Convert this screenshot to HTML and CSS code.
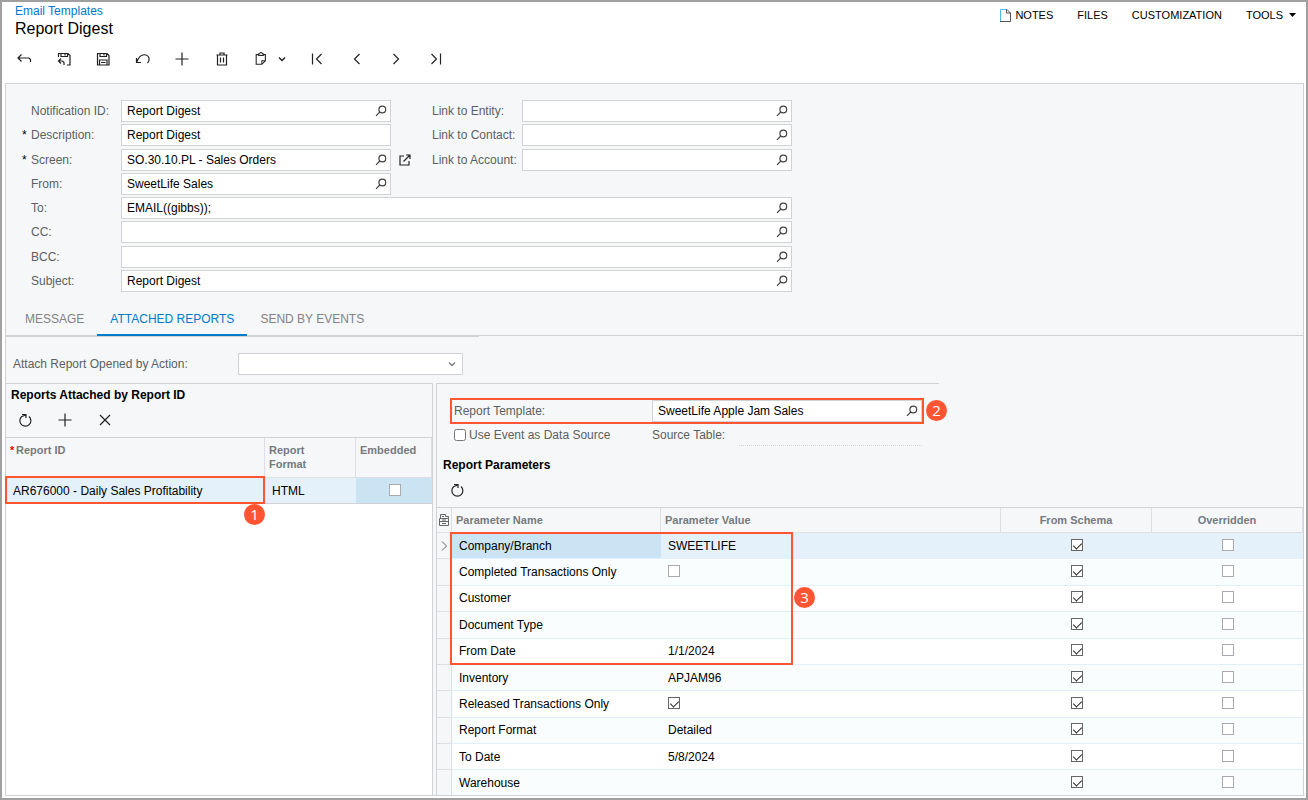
FILE: index.html
```html
<!DOCTYPE html>
<html lang="en">
<head>
  <meta charset="UTF-8" />
  <meta name="viewport" content="width=device-width, initial-scale=1.0"/>
  <title>Report Digest</title>
  <link rel="stylesheet" href="styles.css">
</head>
<body>

  <!-- Shared icons -->
  <svg class="sprite" aria-hidden="true">
    <symbol id="search" viewBox="0 0 12 12"><circle cx="7.3" cy="4.5" r="3.4"/><path d="M4.800 7L1 10.800"/></symbol>
    <symbol id="refresh" viewBox="0 0 16 16"><path d="M12 4.500a5.500 5.500 0 1 1-7.500 0.200L8.500 3M5 2.500h4V6"/></symbol>
    <symbol id="plus" viewBox="0 0 16 16"><path d="M8 1.500v13M1.500 8h13"/></symbol>
  </svg>

  <header class="header">
    <div>
      <a href="#" class="breadcrumb">Email Templates</a>
      <h1>Report Digest</h1>
    </div>
    <nav class="menu">
      <a href="#"><svg class="note-icon" viewBox="0 0 12 13"><path class="note-side" d="M1.5 12V.5H8"/><path d="M7.5.5v3.5h4M8 .5l3.5 3.5v8.5H1"/></svg>NOTES</a>
      <a href="#">FILES</a>
      <a href="#">CUSTOMIZATION</a>
      <a href="#">TOOLS<svg class="caret" viewBox="0 0 7 4"><path d="M0 0h7L3.5 4z"/></svg></a>
    </nav>
  </header>

  <!-- Main toolbar -->
  <div class="toolbar main-toolbar">
    <button aria-label="Back"><svg viewBox="0 0 16 16"><path d="M5.5 3.5L2 7l3.500 3.500M2 7h11l1.500 1.500V11"/></svg></button>
    <button aria-label="Save and close"><svg viewBox="0 0 16 16"><path d="M2.500 6V2.500h9.500l2 2v9.500h-3M5 2.500v3h6.500v-3M9 3v1.500M5 7.500L2.500 10 5 12.500M2.500 10h4l1.500 1.500V14"/></svg></button>
    <button aria-label="Save"><svg viewBox="0 0 16 16"><path d="M2.500 2.500h9.500l2 2V14H2.500zM5 2.500v3h6.500v-3M9 3v1.500M4.500 14V9h7.500v5M6 11.500h4.500"/></svg></button>
    <button aria-label="Undo"><svg viewBox="0 0 16 16"><path d="M1.500 7v4.500H6M1.700 11.300C3.500 6 7 3 11 4c3.500 1.200 4.200 5 1.500 8"/></svg></button>
    <button aria-label="Add"><svg><use href="#plus"/></svg></button>
    <button aria-label="Delete"><svg viewBox="0 0 16 16"><path d="M2.500 4h11M6 4V2h4v2M3.500 4v10h9V4M6.500 6.500v5M9.500 6.500v5"/></svg></button>
    <button class="clipboard" aria-label="Clipboard">
      <svg viewBox="0 0 16 16"><path d="M5 3H2.500v11H9l4-4V3h-2.500M5.500 2h1a1.500 1.500 0 0 1 3 0h1v2h-5zM9 14v-4h4"/></svg>
      <svg class="drop" viewBox="0 0 8 8"><path d="M1 2.500l3 3 3-3"/></svg>
    </button>
    <button aria-label="First"><svg viewBox="0 0 16 16"><path d="M3.500 2.500v11M12.500 3L7.500 8l5 5"/></svg></button>
    <button aria-label="Previous"><svg viewBox="0 0 16 16"><path d="M10.500 3l-5 5 5 5"/></svg></button>
    <button aria-label="Next"><svg viewBox="0 0 16 16"><path d="M5.500 3l5 5-5 5"/></svg></button>
    <button aria-label="Last"><svg viewBox="0 0 16 16"><path d="M12.500 2.500v11M3.500 3l5 5-5 5"/></svg></button>
  </div>

  <main class="panel">
    <!-- Template summary -->
    <form class="summary">
      <label for="notificationId">Notification ID:</label>
      <div class="field"><input id="notificationId" value="Report Digest"><button type="button" aria-label="Select"><svg><use href="#search"/></svg></button></div>
      <label class="second" for="entity">Link to Entity:</label>
      <div class="field"><input id="entity"><button type="button" aria-label="Select"><svg><use href="#search"/></svg></button></div>

      <label class="required" for="description">Description:</label>
      <div class="field"><input id="description" value="Report Digest"></div>
      <label class="second" for="contact">Link to Contact:</label>
      <div class="field"><input id="contact"><button type="button" aria-label="Select"><svg><use href="#search"/></svg></button></div>

      <label class="required" for="screen">Screen:</label>
      <div class="field"><input id="screen" value="SO.30.10.PL - Sales Orders"><button type="button" aria-label="Select"><svg><use href="#search"/></svg></button></div>
      <a class="open-link" href="#" aria-label="Open screen"><svg viewBox="0 0 12 12"><path d="M5 2H1v9h9V7M4.500 7.500L11 1M7 1h4v4"/></svg></a>
      <label class="second" for="account">Link to Account:</label>
      <div class="field"><input id="account"><button type="button" aria-label="Select"><svg><use href="#search"/></svg></button></div>

      <label for="from">From:</label>
      <div class="field"><input id="from" value="SweetLife Sales"><button type="button" aria-label="Select"><svg><use href="#search"/></svg></button></div>

      <label for="to">To:</label>
      <div class="field wide"><input id="to" value="EMAIL((gibbs));"><button type="button" aria-label="Select"><svg><use href="#search"/></svg></button></div>

      <label for="cc">CC:</label>
      <div class="field wide"><input id="cc"><button type="button" aria-label="Select"><svg><use href="#search"/></svg></button></div>

      <label for="bcc">BCC:</label>
      <div class="field wide"><input id="bcc"><button type="button" aria-label="Select"><svg><use href="#search"/></svg></button></div>

      <label for="subject">Subject:</label>
      <div class="field wide"><input id="subject" value="Report Digest"><button type="button" aria-label="Select"><svg><use href="#search"/></svg></button></div>
    </form>

    <!-- Tabs -->
    <div class="tab-bar">
      <div class="tabs" role="tablist">
        <button role="tab">MESSAGE</button>
        <button role="tab" class="active" aria-selected="true">ATTACHED REPORTS</button>
        <button role="tab">SEND BY EVENTS</button>
      </div>
    </div>

    <div class="action-row">
      <label for="action">Attach Report Opened by Action:</label>
      <div class="select-wrap">
        <select id="action"><option></option></select>
        <svg viewBox="0 0 8 8"><path d="M1 2.500l3 3 3-3"/></svg>
      </div>
    </div>

    <div class="split">
      <!-- Attached reports -->
      <section class="left-pane">
        <h2>Reports Attached by Report ID</h2>
        <div class="toolbar">
          <button aria-label="Refresh"><svg><use href="#refresh"/></svg></button>
          <button aria-label="Add"><svg><use href="#plus"/></svg></button>
          <button aria-label="Delete"><svg viewBox="0 0 16 16"><path d="M3 3l10 10M13 3L3 13"/></svg></button>
        </div>
        <div class="reports-wrap">
          <table class="grid reports">
            <colgroup><col class="col-report"><col class="col-format"><col></colgroup>
            <thead>
              <tr><th class="required-col">Report ID</th><th>Report<br>Format</th><th>Embedded</th></tr>
            </thead>
            <tbody>
              <tr class="selected"><td>AR676000 - Daily Sales Profitability</td><td>HTML</td><td class="check current"><input type="checkbox" aria-label="Embedded"></td></tr>
            </tbody>
          </table>
          <div class="highlight highlight-report"><span class="badge">1</span></div>
        </div>
      </section>

      <!-- Report parameters -->
      <section class="right-pane">
        <div class="template-form">
          <div class="template-row">
            <label for="template">Report Template:</label>
            <div class="field"><input id="template" value="SweetLife Apple Jam Sales"><button type="button" aria-label="Select"><svg><use href="#search"/></svg></button></div>
            <div class="highlight highlight-template"><span class="badge">2</span></div>
          </div>
          <div class="source-row">
            <label class="event"><input type="checkbox">Use Event as Data Source</label>
            <div class="source"><span>Source Table:</span><output></output></div>
          </div>
        </div>
        <h2>Report Parameters</h2>
        <div class="toolbar">
          <button aria-label="Refresh"><svg><use href="#refresh"/></svg></button>
        </div>
        <div class="params-wrap">
          <table class="grid params">
            <colgroup><col class="col-mark"><col class="col-name"><col><col class="col-flag"><col class="col-flag"></colgroup>
            <thead>
              <tr>
                <th class="mark"><svg viewBox="0 0 10 12"><path d="M1.500 4.500v-4h5v2h3v2M.500 4.500h9v7h-9zM.500 7.500h9M3 2.500h2M3 6h4M3 9.500h4"/></svg></th>
                <th>Parameter Name</th><th>Parameter Value</th><th class="check">From Schema</th><th class="check">Overridden</th>
              </tr>
            </thead>
            <tbody>
              <tr class="selected"><td class="mark"><svg viewBox="0 0 10 12"><path d="M3 1.500L7.500 6 3 10.500"/></svg></td><td class="current">Company/Branch</td><td>SWEETLIFE</td><td class="check"><input type="checkbox" aria-label="From schema" checked></td><td class="check"><input type="checkbox" aria-label="Overridden"></td></tr>
              <tr><td class="mark"></td><td>Completed Transactions Only</td><td><input type="checkbox" aria-label="Value"></td><td class="check"><input type="checkbox" aria-label="From schema" checked></td><td class="check"><input type="checkbox" aria-label="Overridden"></td></tr>
              <tr><td class="mark"></td><td>Customer</td><td></td><td class="check"><input type="checkbox" aria-label="From schema" checked></td><td class="check"><input type="checkbox" aria-label="Overridden"></td></tr>
              <tr><td class="mark"></td><td>Document Type</td><td></td><td class="check"><input type="checkbox" aria-label="From schema" checked></td><td class="check"><input type="checkbox" aria-label="Overridden"></td></tr>
              <tr><td class="mark"></td><td>From Date</td><td>1/1/2024</td><td class="check"><input type="checkbox" aria-label="From schema" checked></td><td class="check"><input type="checkbox" aria-label="Overridden"></td></tr>
              <tr><td class="mark"></td><td>Inventory</td><td>APJAM96</td><td class="check"><input type="checkbox" aria-label="From schema" checked></td><td class="check"><input type="checkbox" aria-label="Overridden"></td></tr>
              <tr><td class="mark"></td><td>Released Transactions Only</td><td><input type="checkbox" aria-label="Value" checked></td><td class="check"><input type="checkbox" aria-label="From schema" checked></td><td class="check"><input type="checkbox" aria-label="Overridden"></td></tr>
              <tr><td class="mark"></td><td>Report Format</td><td>Detailed</td><td class="check"><input type="checkbox" aria-label="From schema" checked></td><td class="check"><input type="checkbox" aria-label="Overridden"></td></tr>
              <tr><td class="mark"></td><td>To Date</td><td>5/8/2024</td><td class="check"><input type="checkbox" aria-label="From schema" checked></td><td class="check"><input type="checkbox" aria-label="Overridden"></td></tr>
              <tr><td class="mark"></td><td>Warehouse</td><td></td><td class="check"><input type="checkbox" aria-label="From schema" checked></td><td class="check"><input type="checkbox" aria-label="Overridden"></td></tr>
            </tbody>
          </table>
          <div class="highlight highlight-params"><span class="badge">3</span></div>
        </div>
      </section>
    </div>
  </main>

</body>
</html>
```

FILE: styles.css
```css
* {
  box-sizing: border-box;
}

body {
  margin: 0;
  min-height: 100vh;
  padding: 0 2px 2px 3px;
  border: 2px solid #a0a0a0;
  display: flex;
  flex-direction: column;
  font-family: "Liberation Sans", Arial, sans-serif;
  font-size: 12px;
  color: #000;
  background: #fff;
}

h1, h2 {
  margin: 0;
}

a {
  color: inherit;
  text-decoration: none;
}

button {
  padding: 0;
  border: 0;
  background: none;
  font: inherit;
  color: inherit;
  cursor: pointer;
}

svg {
  display: block;
  fill: none;
  stroke: currentColor;
}

.sprite {
  position: absolute;
  width: 0;
  height: 0;
}

/* Header */
.header {
  display: flex;
  justify-content: space-between;
  padding: 0 8px 0 10px;
}

.breadcrumb {
  display: block;
  line-height: 18px;
  color: #027acc;
}

h1 {
  font-size: 16px;
  font-weight: normal;
  line-height: 18px;
}

.menu {
  display: flex;
  gap: 24px;
  height: 26px;
  font-size: 11px;
}

.menu a {
  display: flex;
  align-items: center;
}

.note-icon {
  width: 12px;
  height: 13px;
  margin-right: 4px;
  stroke: #555;
}

.note-side {
  stroke: #4dbbe8;
}

.caret {
  width: 7px;
  height: 4px;
  margin-left: 6px;
  fill: #000;
  stroke: none;
}

/* Toolbars */
.toolbar {
  display: flex;
  align-items: center;
  gap: 24px;
  height: 28px;
  margin-bottom: 3px;
  padding-left: 11px;
  color: #222;
}

.toolbar button {
  flex: none;
  width: 16px;
}

.toolbar svg {
  width: 16px;
  height: 16px;
  stroke-width: 1.2;
}

.main-toolbar {
  width: 439px;
  height: 42px;
  justify-content: space-between;
  gap: 0;
}

.toolbar .clipboard {
  display: flex;
  align-items: center;
  gap: 10px;
  width: 32px;
}

.toolbar .drop {
  flex: none;
  width: 8px;
  height: 8px;
  stroke-width: 1.5;
}

/* Panel */
.panel {
  flex: 1;
  display: flex;
  flex-direction: column;
  border: 1px solid #d0d2d6;
  background: #f5f7f9;
}

label, .source {
  color: #5c5f63;
}

.summary {
  display: grid;
  grid-template-columns: 99px 270px 41px 90px 270px;
  grid-auto-rows: 1fr;
  align-items: center;
  height: 209px;
  padding: 15px 0 0 16px;
}

.summary label::before {
  content: "";
  display: inline-block;
  width: 9px;
  color: #000;
}

.summary .required::before {
  content: "*";
}

.summary label {
  grid-column: 1;
}

.summary .second {
  grid-column: 4;
}

.summary .second::before {
  display: none;
}

.summary .wide {
  grid-column: 2 / 6;
}

.field {
  display: flex;
  align-items: center;
  height: 22px;
  border: 1px solid #d0d2d6;
  background: #fff;
}

.field input {
  flex: 1;
  min-width: 0;
  padding: 0 5px;
  border: 0;
  outline: 0;
  background: none;
  font: inherit;
  color: #000;
}

.field button {
  margin-right: 3px;
}

.field svg {
  width: 12px;
  height: 12px;
  stroke: #444;
  stroke-width: 1.2;
}

.open-link svg {
  width: 12px;
  height: 12px;
  margin-left: 8px;
  stroke: #222;
  stroke-width: 1.2;
}

/* Tabs */
.tab-bar {
  display: flex;
  align-items: flex-end;
  height: 43px;
  border-bottom: 1px solid #d0d2d6;
}

.tabs {
  display: flex;
  width: 473px;
  margin-bottom: -2px;
  padding-left: 6px;
  border-bottom: 2px solid #d0d2d6;
}

.tabs button {
  margin-bottom: -1px;
  padding: 0 13px;
  border-bottom: 2px solid transparent;
  line-height: 30px;
  color: #808285;
}

.tabs .active {
  border-color: #027acc;
  color: #027acc;
}

.action-row {
  display: flex;
  align-items: center;
  padding: 17px 0 8px 7px;
}

.action-row label {
  width: 225px;
}

.select-wrap {
  position: relative;
}

.select-wrap select {
  display: block;
  appearance: none;
  width: 225px;
  height: 22px;
  border: 1px solid #d0d2d6;
  border-radius: 0;
  background: #fff;
  font: inherit;
}

.select-wrap svg {
  position: absolute;
  top: 7px;
  right: 7px;
  width: 8px;
  height: 8px;
  stroke: #777;
  stroke-width: 1.3;
  pointer-events: none;
}

/* Panes */
.split {
  flex: 1;
  display: grid;
  grid-template-columns: 427px 1fr;
  gap: 3px;
}

.left-pane {
  display: flex;
  flex-direction: column;
  border-top: 1px solid #d0d2d6;
  border-right: 1px solid #d0d2d6;
}

.right-pane {
  border-left: 1px solid #d0d2d6;
}

h2 {
  padding-left: 5px;
  font-size: 12px;
  line-height: 22px;
}

.right-pane h2 {
  padding-left: 6px;
}

.right-pane .toolbar {
  padding-left: 12px;
}

.template-form {
  width: 502px;
  padding: 14px 17px 8px;
  border-top: 1px solid #d0d2d6;
}

.template-row, .source-row {
  position: relative;
  display: grid;
  grid-template-columns: 198px 270px;
  align-items: center;
  height: 26px;
}

.source-row {
  height: 22px;
}

.event {
  display: flex;
  align-items: center;
}

.event input {
  width: 12px;
  height: 12px;
  margin: 0 3px 0 0;
}

.source {
  display: flex;
  line-height: 22px;
}

.source span {
  width: 87px;
}

.source output {
  flex: 1;
  border-bottom: 1px dotted #d0d2d6;
}

/* Grids */
.grid {
  width: 100%;
  table-layout: fixed;
  border-collapse: separate;
  border-spacing: 0;
  border-top: 1px solid #d0d2d6;
}

.grid th {
  padding: 0 4px;
  border-right: 1px solid #dcdfe3;
  border-bottom: 1px solid #dcdfe3;
  background: #f5f7f9;
  font-size: 11px;
  line-height: 14px;
  text-align: left;
  color: #777a7d;
}

.grid td {
  padding: 0 7px;
  border-bottom: 1px solid #e0effa;
}

.grid .selected td {
  background: #e4f1fa;
}

.grid .selected .current {
  background: #cae4f4;
}

.grid .check {
  text-align: center;
}

.grid td.check {
  padding-left: 8px;
}

.grid input {
  display: block;
  position: relative;
  appearance: none;
  width: 12px;
  height: 12px;
  margin: 0 0 2px;
  border: 1px solid #aca8b0;
  background: #fff;
}

.grid .check input {
  margin: 0 auto 2px;
}

.grid input:checked {
  border-color: #666;
}

.grid input:checked::after {
  content: "";
  position: absolute;
  top: 1px;
  left: 3px;
  width: 4px;
  height: 7px;
  border: solid #222;
  border-width: 0 1px 1px 0;
  transform: rotate(45deg);
}

.reports-wrap {
  position: relative;
  flex: 1;
  background: #fff;
}

.reports th {
  height: 40px;
  padding-top: 5px;
  vertical-align: top;
}

.reports td {
  height: 26px;
  border-color: #d0d2d6;
}

.required-col::before {
  content: "*";
  display: inline-block;
  width: 6px;
  color: #f00000;
}

.col-report {
  width: 259px;
}

.col-format {
  width: 91px;
}

.params-wrap {
  position: relative;
}

.params {
  height: 288px;
  background: #fff;
}

.params th {
  height: 25px;
}

.params tbody tr:nth-child(even) {
  background: #f9fdfe;
}

.params tbody tr:last-child td {
  border-bottom: 0;
}

.params .mark,
.params .selected .mark {
  padding: 0 2px;
  border-right: 1px solid #dcdfe3;
  border-bottom: 1px solid #dcdfe3;
  background: #f5f7f9;
}

.mark svg {
  width: 10px;
  height: 12px;
  stroke: #666;
}

.col-mark {
  width: 15px;
}

.col-name {
  width: 209px;
}

.col-flag {
  width: 151px;
}

/* Callouts */
.highlight {
  position: absolute;
  border: 2px solid #ff5533;
  pointer-events: none;
}

.highlight-report {
  top: 39px;
  left: -1px;
  width: 260px;
  height: 28px;
}

.highlight-template {
  inset: 0 -2px 0 -4px;
}

.highlight-params {
  top: 25px;
  left: 13px;
  width: 343px;
  height: 133px;
}

.badge {
  position: absolute;
  width: 21px;
  height: 21px;
  border-radius: 50%;
  background: #ff5533;
  color: #fff;
  font-family: "Open Sans", sans-serif;
  font-size: 15px;
  line-height: 21px;
  text-align: center;
}

.highlight-report .badge {
  top: 26px;
  right: -2px;
}

.highlight-template .badge {
  top: 0;
  right: -25px;
}

.highlight-params .badge {
  top: 53px;
  right: -24px;
}
```
